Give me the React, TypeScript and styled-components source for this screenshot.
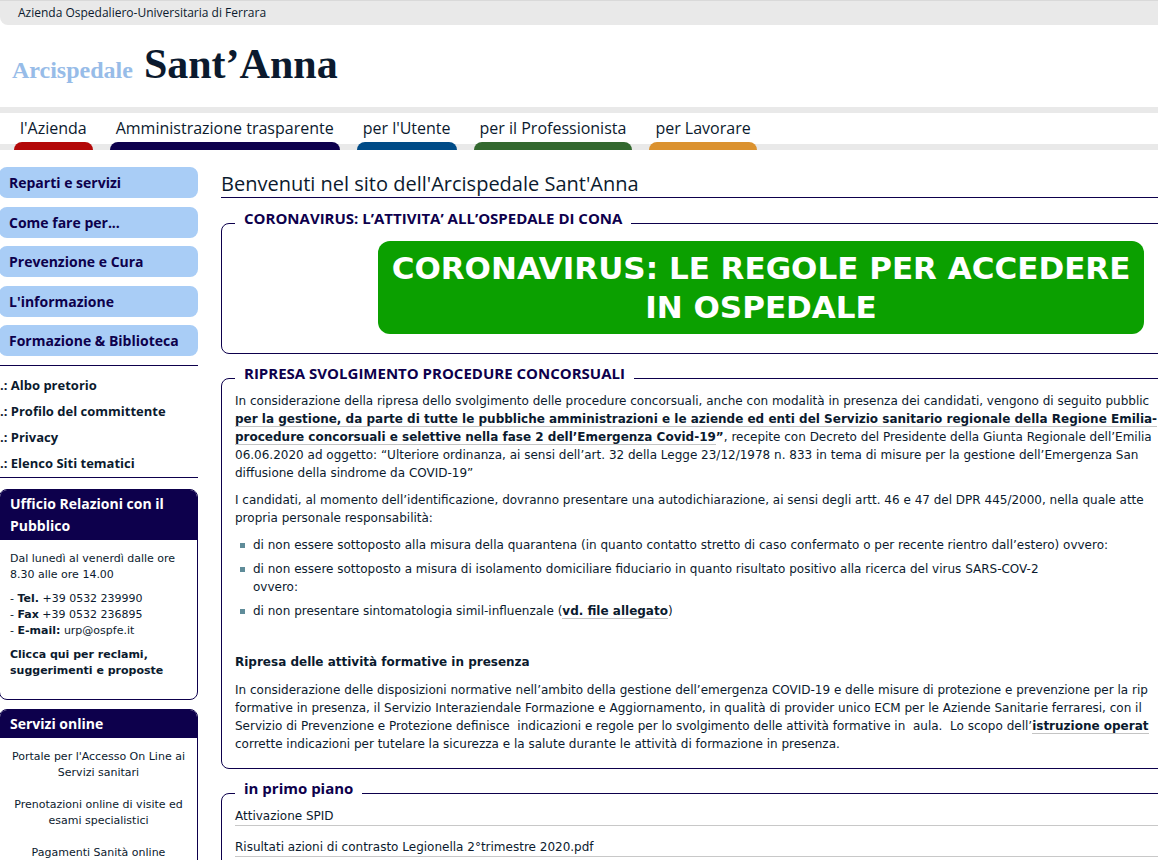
import React from "react";
import styled, { createGlobalStyle } from "styled-components";

const navy = "#0d004c";
const ink = "#0b1a2e";
const heading = `"Open Sans", "Noto Sans", sans-serif`;

const GlobalStyle = createGlobalStyle`
  * { box-sizing: border-box; }
  body {
    margin: 0;
    background: #fff;
    color: ${ink};
    font: 12px/18px "DejaVu Sans", sans-serif;
    overflow: hidden;
  }
  a { color: inherit; text-decoration: none; }
  h1, h2, p, ul { margin: 0; padding: 0; }
`;

const Page = styled.div`
  height: 100vh;
  overflow: hidden;
`;

const TopBar = styled.div`
  height: 25px;
  padding-left: 18px;
  border-top: 1px solid #d9d9d9;
  border-bottom-left-radius: 8px;
  background: #e9e9e9;
  font: 12px/24px ${heading};
`;

const Header = styled.header`
  height: 82px;
  padding: 15px 12px 0;
  white-space: nowrap;
`;

const Logo = styled.a`
  display: inline-flex;
  align-items: baseline;
  gap: 11px;
  font: bold 42px/48px "Liberation Serif", serif;
`;

const LogoPrefix = styled.span`
  color: #97bce8;
  font-size: 24px;
`;

const Nav = styled.nav`
  display: flex;
  gap: 17px;
  height: 43px;
  padding-left: 14px;
  border-top: 6px solid #e9e9e9;
  background: linear-gradient(#e9e9e9, #e9e9e9) bottom / 100% 6px no-repeat;
`;

const NavItem = styled.a<{ $color: string }>`
  display: flex;
  flex-direction: column;
  justify-content: space-between;
  font: 16px/30px ${heading};
  text-align: center;
  white-space: nowrap;
  &::after {
    content: "";
    height: 8px;
    border-radius: 8px 8px 0 0;
    background: ${(p) => p.$color};
  }
  span {
    padding: 0 6px;
    height: 29px;
  }
`;

const Columns = styled.div`
  display: flex;
  gap: 23px;
  padding-top: 17px;
`;

const Sidebar = styled.aside`
  flex: 0 0 199px;
  margin-left: -1px;
`;

const Menu = styled.nav`
  display: flex;
  flex-direction: column;
  justify-content: space-between;
  height: 189px;
`;

const MenuLink = styled.a`
  height: 31px;
  padding-left: 10px;
  border-radius: 8px;
  background: #a9cdf6;
  color: ${navy};
  font: bold 14px/31px ${heading};
`;

const QuickLinks = styled.nav`
  display: flex;
  flex-direction: column;
  margin: 9px 0 11px;
  padding: 6px 0 1px 1px;
  border: solid ${navy};
  border-width: 1px 0;
  font: bold 13px/26px ${heading};
`;

const Card = styled.section`
  margin-bottom: 9px;
  border: 1px solid ${navy};
  border-radius: 8px;
  overflow: hidden;
`;

const CardTitle = styled.h2`
  padding: 3px 10px;
  background: ${navy};
  color: #fff;
  font: bold 14px/22px ${heading};
`;

const CardBody = styled.div<{ $centered?: boolean }>`
  display: grid;
  gap: ${(p) => (p.$centered ? 16 : 8)}px;
  padding: 11px 10px 20px;
  font-size: 11px;
  line-height: 16px;
  text-align: ${(p) => (p.$centered ? "center" : "left")};
`;

const Main = styled.main`
  flex: 1 0 auto;
  width: calc(100% - 78px);
  padding-top: 3px;
`;

const Title = styled.h1`
  margin-bottom: 12px;
  border-bottom: 1px solid ${navy};
  font: 20px/27px ${heading};
`;

const Panel = styled.fieldset`
  min-width: 0;
  margin: 0 0 11px;
  padding: 1px 13px 15px;
  border: 1px solid ${navy};
  border-radius: 8px;
`;

const Legend = styled.legend`
  padding: 0 9px 10px;
  color: ${navy};
  font: bold 15px/16px ${heading};
`;

const Banner = styled.a`
  display: block;
  width: 766px;
  margin: 4px auto;
  padding: 8px 0 7px;
  border-radius: 12px;
  background: #0ba000;
  color: #fff;
  font: bold 31px/39px "DejaVu Sans", sans-serif;
  text-align: center;
`;

const Paragraph = styled.p`
  margin-bottom: 9px;
  white-space: pre;
  &:last-child { margin-bottom: 0; }
`;

const Subheading = styled.h2`
  margin: 33px 0 10px;
  font-size: 12px;
  line-height: 18px;
`;

const Bullets = styled.ul`
  display: grid;
  gap: 6px;
  list-style: none;
  li {
    display: flex;
    gap: 8px;
    padding-left: 5px;
  }
  li::before {
    content: "";
    flex: none;
    width: 5px;
    height: 5px;
    margin-top: 7px;
    background: #5f8c99;
  }
`;

const TextLink = styled.a`
  border-bottom: 1px solid #c4c4c4;
  font-weight: bold;
`;

const NewsLink = styled.a`
  display: block;
  margin-bottom: 12px;
  border-bottom: 1px solid #c8c8c8;
`;

const sections = [
  { label: "l'Azienda", color: "#b30808" },
  { label: "Amministrazione trasparente", color: navy },
  { label: "per l'Utente", color: "#004b87" },
  { label: "per il Professionista", color: "#33682f" },
  { label: "per Lavorare", color: "#db922f" },
];

const menu = ["Reparti e servizi", "Come fare per...", "Prevenzione e Cura", "L'informazione", "Formazione & Biblioteca"];
const quickLinks = ["Albo pretorio", "Profilo del committente", "Privacy", "Elenco Siti tematici"];

export default function App() {
  return (
    <Page>
      <GlobalStyle />
      <TopBar>Azienda Ospedaliero-Universitaria di Ferrara</TopBar>
      <Header>
        <Logo href="#">
          <LogoPrefix>Arcispedale</LogoPrefix>
          <span>Sant’Anna</span>
        </Logo>
      </Header>
      <Nav>
        {sections.map((s) => (
          <NavItem key={s.label} href="#" $color={s.color}>
            <span>{s.label}</span>
          </NavItem>
        ))}
      </Nav>
      <Columns>
        <Sidebar>
          <Menu>
            {menu.map((m) => (
              <MenuLink key={m} href="#">{m}</MenuLink>
            ))}
          </Menu>
          <QuickLinks>
            {quickLinks.map((q) => (
              <a key={q} href="#">.: {q}</a>
            ))}
          </QuickLinks>
          <Card>
            <CardTitle>Ufficio Relazioni con il Pubblico</CardTitle>
            <CardBody>
              <p>Dal lunedì al venerdì dalle ore 8.30 alle ore 14.00</p>
              <p>
                - <b>Tel.</b> +39 0532 239990<br />
                - <b>Fax</b> +39 0532 236895<br />
                - <b>E-mail:</b> <a href="#">urp@ospfe.it</a>
              </p>
              <a href="#"><b>Clicca qui per reclami, suggerimenti e proposte</b></a>
            </CardBody>
          </Card>
          <Card>
            <CardTitle>Servizi online</CardTitle>
            <CardBody $centered>
              <a href="#">Portale per l'Accesso On Line ai Servizi sanitari</a>
              <a href="#">Prenotazioni online di visite ed esami specialistici</a>
              <a href="#">Pagamenti Sanità online</a>
            </CardBody>
          </Card>
        </Sidebar>
        <Main>
          <Title>Benvenuti nel sito dell'Arcispedale Sant'Anna</Title>
          <Panel>
            <Legend>CORONAVIRUS: L’ATTIVITA’ ALL’OSPEDALE DI CONA</Legend>
            <Banner href="#">
              CORONAVIRUS: LE REGOLE PER ACCEDERE<br />IN OSPEDALE
            </Banner>
          </Panel>
          <Panel>
            <Legend>RIPRESA SVOLGIMENTO PROCEDURE CONCORSUALI</Legend>
            <Paragraph>
              In considerazione della ripresa dello svolgimento delle procedure concorsuali, anche con modalità in presenza dei candidati, vengono di seguito pubblic<br />
              <TextLink href="#">
                per la gestione, da parte di tutte le pubbliche amministrazioni e le aziende ed enti del Servizio sanitario regionale della Regione Emilia-<br />
                procedure concorsuali e selettive nella fase 2 dell’Emergenza Covid-19
              </TextLink>
              <b>”</b>, recepite con Decreto del Presidente della Giunta Regionale dell’Emilia<br />
              06.06.2020 ad oggetto: “Ulteriore ordinanza, ai sensi dell’art. 32 della Legge 23/12/1978 n. 833 in tema di misure per la gestione dell’Emergenza San<br />
              diffusione della sindrome da COVID-19”
            </Paragraph>
            <Paragraph>
              I candidati, al momento dell’identificazione, dovranno presentare una autodichiarazione, ai sensi degli artt. 46 e 47 del DPR 445/2000, nella quale atte<br />
              propria personale responsabilità:
            </Paragraph>
            <Bullets>
              <li>di non essere sottoposto alla misura della quarantena (in quanto contatto stretto di caso confermato o per recente rientro dall’estero) ovvero:</li>
              <li>
                <span>
                  di non essere sottoposto a misura di isolamento domiciliare fiduciario in quanto risultato positivo alla ricerca del virus SARS-COV-2<br />
                  ovvero:
                </span>
              </li>
              <li><span>di non presentare sintomatologia simil-influenzale (<TextLink href="#">vd. file allegato</TextLink>)</span></li>
            </Bullets>
            <Subheading>Ripresa delle attività formative in presenza</Subheading>
            <Paragraph>
              In considerazione delle disposizioni normative nell’ambito della gestione dell’emergenza COVID-19 e delle misure di protezione e prevenzione per la rip<br />
              formative in presenza, il Servizio Interaziendale Formazione e Aggiornamento, in qualità di provider unico ECM per le Aziende Sanitarie ferraresi, con il<br />
              Servizio di Prevenzione e Protezione definisce{"  "}indicazioni e regole per lo svolgimento delle attività formative in{"  "}aula.{"  "}Lo scopo dell’<TextLink href="#">istruzione operat</TextLink><br />
              corrette indicazioni per tutelare la sicurezza e la salute durante le attività di formazione in presenza.
            </Paragraph>
          </Panel>
          <Panel>
            <Legend>in primo piano</Legend>
            <NewsLink href="#">Attivazione SPID</NewsLink>
            <NewsLink href="#">Risultati azioni di contrasto Legionella 2°trimestre 2020.pdf</NewsLink>
          </Panel>
        </Main>
      </Columns>
    </Page>
  );
}
